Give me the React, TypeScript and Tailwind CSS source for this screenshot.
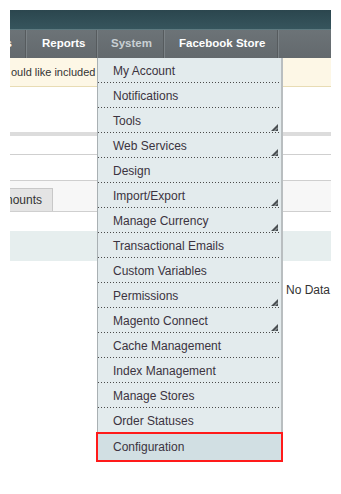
import React from "react";

const items: { label: string; sub?: boolean }[] = [
  { label: "My Account" },
  { label: "Notifications" },
  { label: "Tools", sub: true },
  { label: "Web Services", sub: true },
  { label: "Design" },
  { label: "Import/Export", sub: true },
  { label: "Manage Currency", sub: true },
  { label: "Transactional Emails" },
  { label: "Custom Variables" },
  { label: "Permissions", sub: true },
  { label: "Magento Connect", sub: true },
  { label: "Cache Management" },
  { label: "Index Management" },
  { label: "Manage Stores" },
  { label: "Order Statuses" },
];

function SubArrow() {
  return (
    <svg width="7" height="7" viewBox="0 0 7 7" className="absolute right-[3px] bottom-[2px]">
      <path d="M7 0 L7 7 L0 7 Z" fill="#4a4f52" />
      <path d="M3.5 7 L7 3.5" stroke="#c9d2d5" strokeWidth="0.8" />
    </svg>
  );
}

function Dots() {
  return <div className="h-px w-full bg-[repeating-linear-gradient(to_right,#4a4a4a_0_1px,transparent_1px_3px)]" />;
}

export default function App() {
  return (
    <div className="relative w-[341px] h-[494px] bg-white overflow-hidden font-[family-name:Liberation_Sans,Arial,sans-serif]">
      <div className="ml-[10px] w-[321px] pt-[10px] overflow-hidden">
        <div className="h-[19px] bg-[linear-gradient(#2b464e,#36555d)]" />
        <div className="h-px bg-[#5d7a80]" />
        <div className="h-[28px] flex bg-[linear-gradient(#6c7377,#63696d)] text-[11.5px] font-bold text-white">
          <div className="flex items-center justify-end w-[16px] pr-[13px] border-r border-[#565b5e] overflow-hidden whitespace-nowrap">
            <span>Promotions</span>
          </div>
          <div className="flex items-center w-[71px] pl-[15px] border-l border-[#7b8286] border-r border-r-[#565b5e]">Reports</div>
          <div className="flex items-center w-[67px] pl-[13px] text-[#c9d0d4] border-l border-[#7b8286] border-r border-r-[#565b5e]">System</div>
          <div className="flex items-center w-[114px] pl-[14px] border-l border-[#7b8286] border-r border-r-[#565b5e]">Facebook Store</div>
          <div className="flex-1 border-l border-[#7b8286]" />
        </div>
        <div className="h-[29px] flex items-center bg-[#fdf7e6] border-b border-[#e8dcb4] text-[11px] text-[#333] whitespace-nowrap">
          <span className="ml-[1px]">ould like included in the report</span>
        </div>
        <div className="h-[45px]" />
        <div className="h-[4px] bg-[#dcdcdc]" />
        <div className="h-[18px]" />
        <div className="h-px bg-[#cfcfcf]" />
        <div className="h-[25px]" />
        <div className="h-[32px] flex items-end bg-[#f7f7f7] border-t border-b border-[#cfcfcf]">
          <div className="h-[23px] w-[43px] flex items-center bg-[#e4e4e4] border-r border-t border-[#c8c8c8] text-[12px] text-[#333] overflow-hidden whitespace-nowrap justify-end pr-[10px]">
            nounts
          </div>
        </div>
        <div className="h-[19px]" />
        <div className="h-[30px] bg-[#e6eeee]" />
        <div className="flex justify-end pt-[20px] text-[12px] text-[#333]">
          <span className="w-[45px]">No Data</span>
        </div>
      </div>

      <div className="absolute left-[97px] top-[58px] w-[186px] bg-[#e3ebed] border-l border-[#a9b0b3] border-r-2 border-r-[#b9bec0] text-[12px] text-[#3b3340]">
        {items.map((it) => (
          <div key={it.label} className="relative h-[25px] flex flex-col">
            <div className="flex-1 flex items-center pl-[15px] pt-px">{it.label}</div>
            {it.sub && <SubArrow />}
            <Dots />
          </div>
        ))}
      </div>
      <div className="absolute left-[96px] top-[432px] w-[187px] h-[30px] border-2 border-[#ff1a1a] bg-[#d1dfe3] flex items-center pl-[15px] text-[12px] text-[#3b3340]">
        Configuration
      </div>
    </div>
  );
}
